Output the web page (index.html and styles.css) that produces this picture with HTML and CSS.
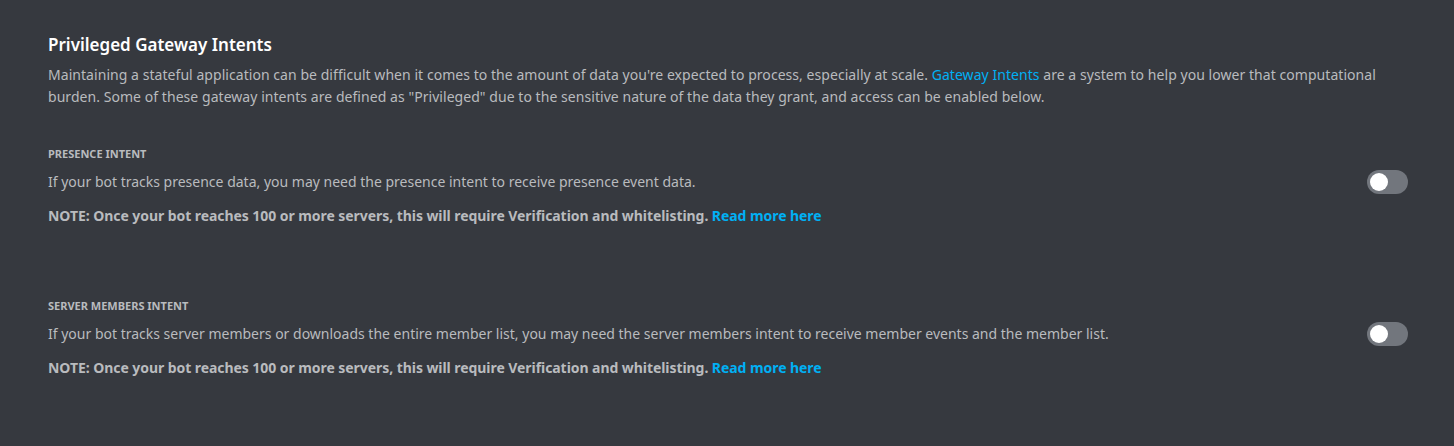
FILE: index.html
```html
<!DOCTYPE html>
<html>
<head>
<meta charset="utf-8">
<link rel="stylesheet" href="styles.css">
</head>
<body>
<main class="page">
  <h2 class="title">Privileged Gateway Intents</h2>
  <p class="lead">Maintaining a stateful application can be difficult when it comes to the amount of data you're expected to process, especially at scale. <a class="link" href="#">Gateway Intents</a> are a system to help you lower that computational burden. Some of these gateway intents are defined as "Privileged" due to the sensitive nature of the data they grant, and access can be enabled below.</p>

  <section class="intent">
    <h5 class="intent-label">Presence Intent</h5>
    <div class="intent-row">
      <p class="intent-desc">If your bot tracks presence data, you may need the presence intent to receive presence event data.</p>
      <div class="toggle"><span class="knob"></span></div>
    </div>
    <p class="note">NOTE: Once your bot reaches 100 or more servers, this will require Verification and whitelisting. <a class="link" href="#">Read more here</a></p>
  </section>

  <section class="intent">
    <h5 class="intent-label">Server Members Intent</h5>
    <div class="intent-row">
      <p class="intent-desc">If your bot tracks server members or downloads the entire member list, you may need the server members intent to receive member events and the member list.</p>
      <div class="toggle"><span class="knob"></span></div>
    </div>
    <p class="note">NOTE: Once your bot reaches 100 or more servers, this will require Verification and whitelisting. <a class="link" href="#">Read more here</a></p>
  </section>
</main>
</body>
</html>
```
FILE: styles.css
```css
html, body {
  margin: 0;
  padding: 0;
  background: #36393f;
  height: 100%;
}
body {
  font-family: "Noto Sans", "Open Sans", sans-serif;
  color: #b9bbbe;
}
.page {
  padding: 32px 46px 0 48px;
}
.title {
  margin: 0;
  color: #ffffff;
  font-size: 17px;
  font-weight: 600;
  line-height: 26px;
}
.lead {
  margin: 6px 0 0;
  font-size: 14px;
  line-height: 22px;
  letter-spacing: 0.05px;
}
.link {
  color: #00b0f4;
  text-decoration: none;
}
.intent {
  margin-top: 38px;
}
.intent + .intent {
  margin-top: 71px;
}
.intent-label {
  margin: 0;
  font-size: 11px;
  font-weight: 700;
  text-transform: uppercase;
  line-height: 16px;
  color: #b9bbbe;
}
.intent-row {
  display: flex;
  align-items: center;
  justify-content: space-between;
  margin-top: 8px;
}
.intent-desc {
  margin: 0;
  font-size: 14px;
  line-height: 22px;
}
.toggle {
  width: 41px;
  height: 24px;
  border-radius: 12px;
  background: #72767d;
  position: relative;
  flex: none;
}
.knob {
  position: absolute;
  left: 3px;
  top: 3px;
  width: 18px;
  height: 18px;
  border-radius: 50%;
  background: #fff;
}
.note {
  margin: 11px 0 0;
  font-size: 14px;
  font-weight: 700;
  line-height: 22px;
  letter-spacing: -0.06px;
}
```
